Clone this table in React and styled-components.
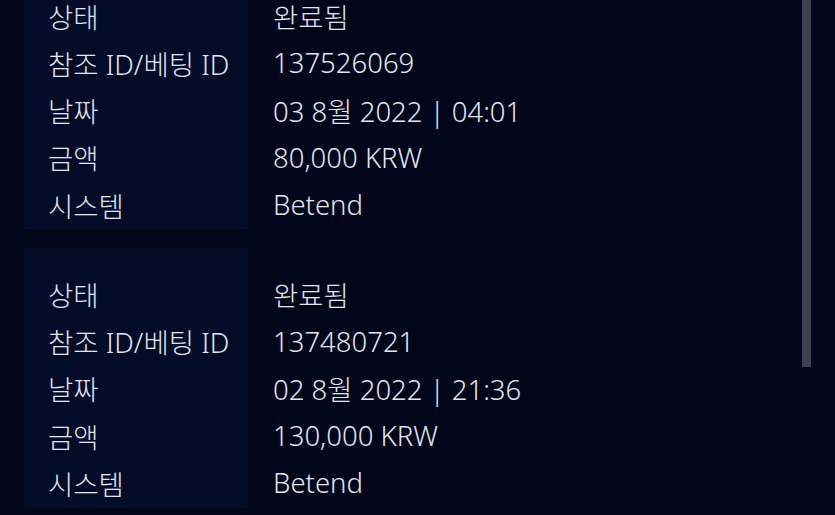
import React from 'react';
import styled, { createGlobalStyle } from 'styled-components';

const GlobalStyle = createGlobalStyle`
  html, body {
    margin: 0;
    padding: 0;
    background: #01061a;
    overflow: hidden;
  }
  body {
    font-family: 'Noto Sans', 'Noto Sans CJK KR', sans-serif;
  }
`;

const Page = styled.div`
  width: 835px;
  height: 515px;
  position: relative;
  overflow: hidden;
`;

const List = styled.div`
  display: flex;
  flex-direction: column;
  gap: 19px;
  padding-left: 24px;
  margin-top: -30px;
`;

const Card = styled.div`
  display: grid;
  grid-template-columns: 224px 1fr;
`;

const LabelCol = styled.div`
  background: #020b27;
  box-shadow: 0 0 6px rgba(0, 0, 0, 0.5);
  padding-top: 22px;
  padding-bottom: 1px;
  display: flex;
  flex-direction: column;
`;

const ValueCol = styled.div`
  padding-top: 22px;
  padding-left: 25px;
  display: flex;
  flex-direction: column;
`;

const Cell = styled.div`
  height: 47.25px;
  display: flex;
  align-items: center;
  font-size: 27.5px;
  font-weight: 300;
  color: #e3e5ec;
  white-space: nowrap;
  padding-left: ${({ $label }) => ($label ? '24px' : '0')};
`;

const Scrollbar = styled.div`
  position: absolute;
  top: 0;
  right: 24px;
  width: 9px;
  height: 367px;
  background: #3d4150;
`;

const labels = ['상태', '참조 ID/베팅 ID', '날짜', '금액', '시스템'];

const records = [
  { status: '완료됨', id: '137526069', date: '03 8월 2022 | 04:01', amount: '80,000 KRW', system: 'Betend' },
  { status: '완료됨', id: '137480721', date: '02 8월 2022 | 21:36', amount: '130,000 KRW', system: 'Betend' },
];

const App = () => (
  <Page>
    <GlobalStyle />
    <List>
      {records.map((r) => (
        <Card key={r.id}>
          <LabelCol>
            {labels.map((l) => (
              <Cell $label key={l}>{l}</Cell>
            ))}
          </LabelCol>
          <ValueCol>
            <Cell>{r.status}</Cell>
            <Cell>{r.id}</Cell>
            <Cell>{r.date}</Cell>
            <Cell>{r.amount}</Cell>
            <Cell>{r.system}</Cell>
          </ValueCol>
        </Card>
      ))}
    </List>
    <Scrollbar />
  </Page>
);

export default App;
